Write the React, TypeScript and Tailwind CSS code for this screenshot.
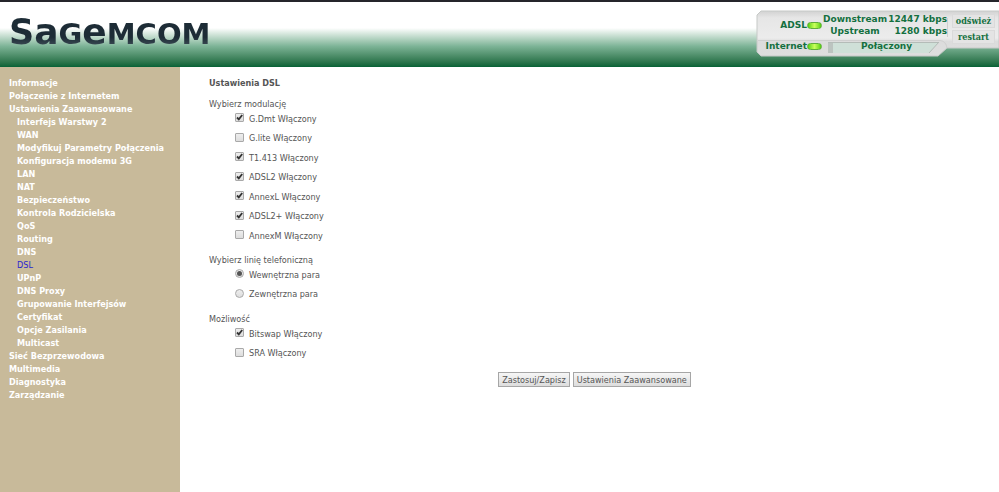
import React from 'react';
import { clsx } from 'clsx';

interface MenuItem {
  label: string;
  sub?: boolean;
  active?: boolean;
}

interface Option {
  id: string;
  label: string;
  checked: boolean;
}

const menu: MenuItem[] = [
  { label: 'Informacje' },
  { label: 'Połączenie z Internetem' },
  { label: 'Ustawienia Zaawansowane' },
  { label: 'Interfejs Warstwy 2', sub: true },
  { label: 'WAN', sub: true },
  { label: 'Modyfikuj Parametry Połączenia', sub: true },
  { label: 'Konfiguracja modemu 3G', sub: true },
  { label: 'LAN', sub: true },
  { label: 'NAT', sub: true },
  { label: 'Bezpieczeństwo', sub: true },
  { label: 'Kontrola Rodzicielska', sub: true },
  { label: 'QoS', sub: true },
  { label: 'Routing', sub: true },
  { label: 'DNS', sub: true },
  { label: 'DSL', sub: true, active: true },
  { label: 'UPnP', sub: true },
  { label: 'DNS Proxy', sub: true },
  { label: 'Grupowanie Interfejsów', sub: true },
  { label: 'Certyfikat', sub: true },
  { label: 'Opcje Zasilania', sub: true },
  { label: 'Multicast', sub: true },
  { label: 'Sieć Bezprzewodowa' },
  { label: 'Multimedia' },
  { label: 'Diagnostyka' },
  { label: 'Zarządzanie' },
];

const modulations: Option[] = [
  { id: 'gdmt', label: 'G.Dmt Włączony', checked: true },
  { id: 'glite', label: 'G.lite Włączony', checked: false },
  { id: 't1413', label: 'T1.413 Włączony', checked: true },
  { id: 'adsl2', label: 'ADSL2 Włączony', checked: true },
  { id: 'annexl', label: 'AnnexL Włączony', checked: true },
  { id: 'adsl2plus', label: 'ADSL2+ Włączony', checked: true },
  { id: 'annexm', label: 'AnnexM Włączony', checked: false },
];

const phoneLines: Option[] = [
  { id: 'inner', label: 'Wewnętrzna para', checked: true },
  { id: 'outer', label: 'Zewnętrzna para', checked: false },
];

const capabilities: Option[] = [
  { id: 'bitswap', label: 'Bitswap Włączony', checked: true },
  { id: 'sra', label: 'SRA Włączony', checked: false },
];

const Logo: React.FC = () => (
  <a
    href="#home"
    aria-label="Sagemcom"
    className="flex items-baseline bg-linear-to-b from-[#1d2c36] from-60% to-[#5a6a72] bg-clip-text font-['DejaVu_Sans',sans-serif] font-bold leading-10 text-transparent"
  >
    <span className="text-[35px]">S</span>
    <span className="text-[36px]">a</span>
    <span className="text-[29px]">G</span>
    <span className="text-[36px]">e</span>
    <span className="text-[29px]">MCOM</span>
  </a>
);

const Led: React.FC = () => (
  <span className="h-[7px] w-[15px] shrink-0 rounded-full border border-[#5fae3a] bg-linear-to-r from-[#4fd100] via-[#c8ff5a] to-[#4fd100]" />
);

const panelButtonClass =
  'h-[14px] border border-[#dadada] bg-[#e4e4e4] whitespace-nowrap';

const StatusPanel: React.FC = () => (
  <div className="relative mt-2 w-[243px] font-['DejaVu_Sans',sans-serif] text-[9px] font-bold leading-3 text-[#14703f]">
    <svg className="absolute inset-0" width="243" height="48" viewBox="0 0 243 48" aria-hidden="true">
      <defs>
        <linearGradient id="panel" x1="0" y1="0" x2="0" y2="1">
          <stop offset="0" stopColor="#d2d2d2" />
          <stop offset="0.15" stopColor="#e6e6e6" />
          <stop offset="0.6" stopColor="#ececec" />
          <stop offset="0.68" stopColor="#dcdcdc" />
          <stop offset="1" stopColor="#dedede" />
        </linearGradient>
      </defs>
      <path d="M5 1H243V38H191L182 46H5L1 42V5Z" fill="url(#panel)" stroke="#c6c9c7" />
      <path d="M2 30.5H184Q190 31 191 38M191.5 8V27" fill="none" stroke="#cfcfcf" />
      <path d="M72 32H183L173 43H72Z" fill="#cfe0d8" />
      <path d="M72 32H77V43H72Z" fill="#bcc4c0" />
      <path d="M72 32.5H183" stroke="#b4bcb8" />
      <path d="M183 32L173 43" stroke="#b4bcb8" />
    </svg>
    <div className="relative flex justify-between">
      <div className="w-[191px]">
        <div className="flex items-center gap-px pt-[3px]">
          <div className="flex w-[66px] shrink-0 items-center justify-end">
            ADSL <Led />
          </div>
          <dl className="flex-1">
            <div className="flex justify-between">
              <dt className="w-[64px] text-center">Downstream</dt>
              <dd className="whitespace-nowrap">12447 kbps</dd>
            </div>
            <div className="flex justify-between">
              <dt className="w-[64px] text-center">Upstream</dt>
              <dd className="whitespace-nowrap">1280 kbps</dd>
            </div>
          </dl>
        </div>
        <div className="flex items-center gap-1 pt-[3px]">
          <div className="flex w-[66px] shrink-0 items-center justify-end">
            Internet <Led />
          </div>
          <div className="flex-1 text-center">Połączony</div>
        </div>
      </div>
      <div className="flex w-[47px] flex-col gap-[2px] pt-1 pr-1 font-['DejaVu_Serif_Condensed','DejaVu_Serif',serif]">
        <button type="button" className={panelButtonClass}>odśwież</button>
        <button type="button" className={panelButtonClass}>restart</button>
      </div>
    </div>
  </div>
);

const boxClass =
  'size-[9px] appearance-none border border-[#a9a9a9] bg-linear-to-b from-[#eeeeee] to-[#dddddd]';

const OptionRow: React.FC<{ option: Option; type: 'checkbox' | 'radio'; name: string }> = ({ option, type, name }) => (
  <div className="flex h-[19px] items-center gap-[5px] even:h-5">
    <span className="-mt-1 grid size-[9px] place-items-center">
      <input
        id={option.id}
        type={type}
        name={name}
        defaultChecked={option.checked}
        className={clsx(boxClass, 'peer col-start-1 row-start-1', type === 'radio' ? 'rounded-full' : 'rounded-[1px]')}
      />
      {type === 'radio' ? (
        <span className="pointer-events-none z-10 col-start-1 row-start-1 hidden size-[5px] rounded-full bg-[#555555] peer-checked:block" />
      ) : (
        <svg
          className="pointer-events-none z-10 col-start-1 row-start-1 hidden peer-checked:block"
          width="9"
          height="9"
          viewBox="0 0 9 9"
          fill="none"
          stroke="#333333"
          strokeWidth="1.8"
        >
          <path d="M2 4.5L3.8 6.3L7.2 2" />
        </svg>
      )}
    </span>
    <label htmlFor={option.id}>{option.label}</label>
  </div>
);

const OptionGroup: React.FC<{ legend: string; name: string; type: 'checkbox' | 'radio'; options: Option[] }> = ({
  legend,
  name,
  type,
  options,
}) => (
  <fieldset className="mb-2">
    <legend className="leading-3">{legend}</legend>
    <div className="pl-[26px]">
      {options.map((option) => (
        <OptionRow key={option.id} option={option} type={type} name={name} />
      ))}
    </div>
  </fieldset>
);

const buttonClass =
  'h-[15px] border border-[#a6a6a6] bg-linear-to-b from-[#f6f6f6] to-[#dddddd] px-[3px] leading-3';

const App: React.FC = () => (
  <div className="flex min-h-screen flex-col bg-white font-['DejaVu_Sans_Condensed','Noto_Sans',sans-serif] text-[9px] text-[#555555]">
    <header className="flex h-[67px] items-start justify-between border-t-2 border-[#25252b] bg-linear-to-b from-white from-40% via-[#7db497] via-68% to-[#056236] pl-[9px]">
      <div className="pt-[10px]">
        <Logo />
      </div>
      <StatusPanel />
    </header>

    <div className="flex flex-1">
      <nav className="w-[180px] shrink-0 bg-[#c8ba9a] pt-[10px] pl-[9px] font-bold leading-[13px] text-white">
        <ul>
          {menu.map((item) => (
            <li key={item.label} className={clsx(item.sub && 'pl-2')}>
              <a href="#menu" className={clsx(item.active && 'font-normal text-[#2a1fd0]')}>
                {item.label}
              </a>
            </li>
          ))}
        </ul>
      </nav>

      <main className="flex-1 pt-[10px] pl-[29px]">
        <form onSubmit={(e) => e.preventDefault()}>
          <h1 className="mb-2 font-bold leading-[13px]">Ustawienia DSL</h1>
          <OptionGroup legend="Wybierz modulację" name="modulation" type="checkbox" options={modulations} />
          <OptionGroup legend="Wybierz linię telefoniczną" name="line" type="radio" options={phoneLines} />
          <OptionGroup legend="Możliwość" name="capability" type="checkbox" options={capabilities} />
          <div className="flex justify-center gap-[3px] pr-[19px]">
            <button type="submit" className={buttonClass}>Zastosuj/Zapisz</button>
            <button type="button" className={buttonClass}>Ustawienia Zaawansowane</button>
          </div>
        </form>
      </main>
    </div>
  </div>
);

export default App;
